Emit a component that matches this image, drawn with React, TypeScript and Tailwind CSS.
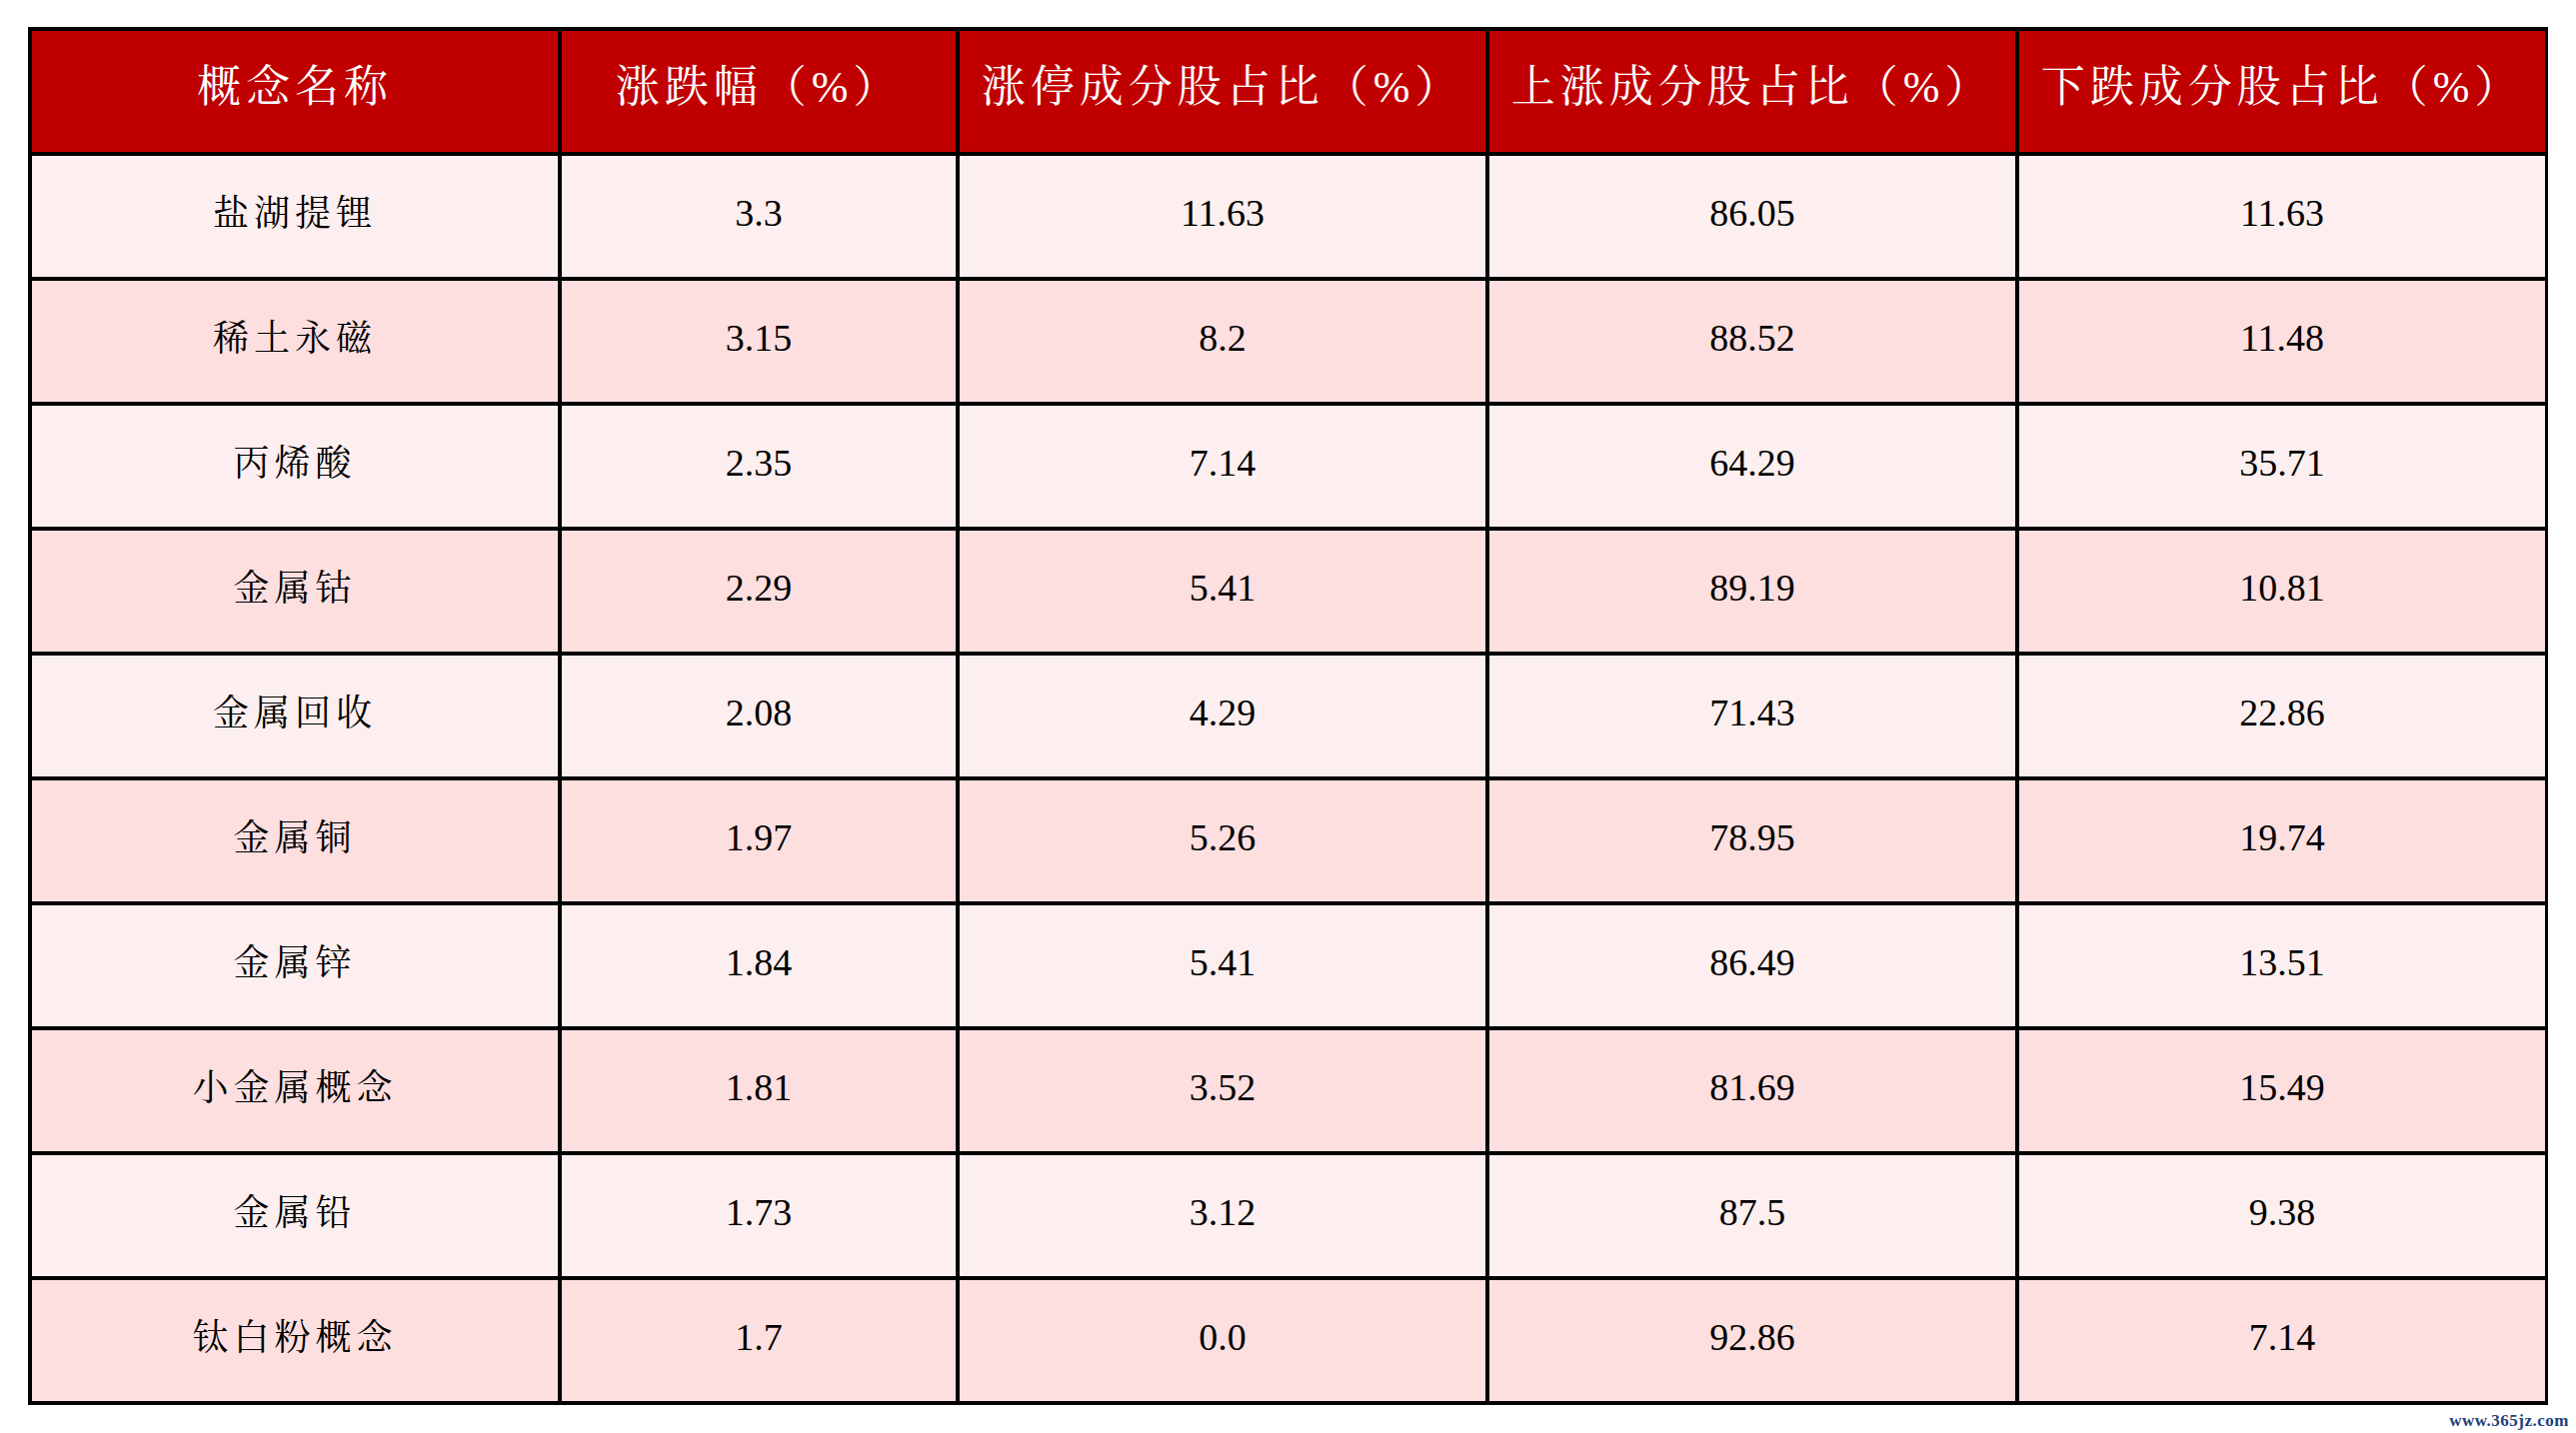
import React from 'react';

const headers = ['概念名称', '涨跌幅（%）', '涨停成分股占比（%）', '上涨成分股占比（%）', '下跌成分股占比（%）'];

const rows: string[][] = [
  ['盐湖提锂', '3.3', '11.63', '86.05', '11.63'],
  ['稀土永磁', '3.15', '8.2', '88.52', '11.48'],
  ['丙烯酸', '2.35', '7.14', '64.29', '35.71'],
  ['金属钴', '2.29', '5.41', '89.19', '10.81'],
  ['金属回收', '2.08', '4.29', '71.43', '22.86'],
  ['金属铜', '1.97', '5.26', '78.95', '19.74'],
  ['金属锌', '1.84', '5.41', '86.49', '13.51'],
  ['小金属概念', '1.81', '3.52', '81.69', '15.49'],
  ['金属铅', '1.73', '3.12', '87.5', '9.38'],
  ['钛白粉概念', '1.7', '0.0', '92.86', '7.14'],
];

const App: React.FC = () => {
  return (
    <div className="w-[2577px] h-[1434px] bg-white flex flex-col font-['Liberation_Serif','Noto_Serif_CJK_SC','Noto_Sans_CJK_SC',serif]">
      <div className="pt-[27px] px-[28px]">
        <div className="grid grid-cols-[526px_394px_526px_526px_526px] auto-rows-[121px] gap-[4px] p-[4px] bg-black">
          {headers.map((h) => (
            <div
              key={h}
              className="bg-[#c00000] text-white flex items-center justify-center pb-[8px] text-[44px] tracking-[5px]"
            >
              {h}
            </div>
          ))}

          {rows.map((row, i) => {
            // zebra stripes like the excel sheet
            const bg = i % 2 === 0 ? 'bg-[#fdefef]' : 'bg-[#fddfe0]';
            return row.map((cell, j) => (
              <div
                key={`${i}-${j}`}
                className={`${bg} text-black flex items-center justify-center pb-[6px] ${
                  j === 0 ? 'text-[36px] tracking-[5px]' : 'text-[38px]'
                }`}
              >
                {cell}
              </div>
            ));
          })}
        </div>
      </div>

      <div className="flex justify-end pr-[7px] mt-[7px]">
        <span className="text-[17px] leading-none font-bold text-[#1d3f7c] tracking-[0.5px]">www.365jz.com</span>
      </div>
    </div>
  );
};

export default App;
